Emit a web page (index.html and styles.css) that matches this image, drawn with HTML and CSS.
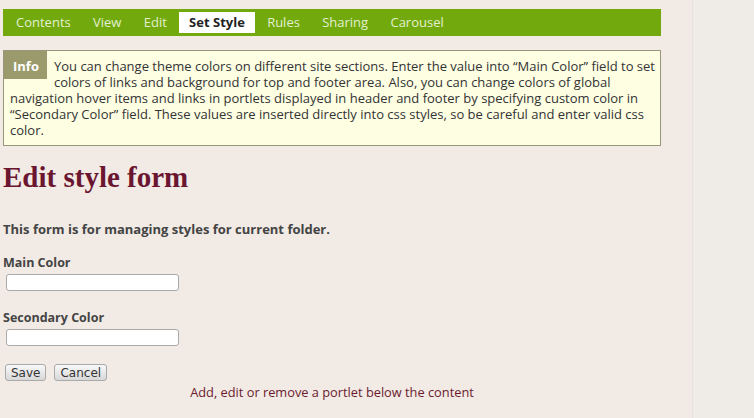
FILE: index.html
```html
<!DOCTYPE html>
<html>
<head>
<meta charset="utf-8">
<link rel="stylesheet" href="styles.css">
</head>
<body>
<div class="page">
  <main class="content">
    <nav class="tabs">
      <a class="tab">Contents</a>
      <a class="tab">View</a>
      <a class="tab">Edit</a>
      <a class="tab active">Set Style</a>
      <a class="tab">Rules</a>
      <a class="tab">Sharing</a>
      <a class="tab">Carousel</a>
    </nav>
    <div class="info">
      <span class="info-label">Info</span>
      <span class="info-text">You can change theme colors on different site sections. Enter the value into “Main Color” field to set colors of links and background for top and footer area. Also, you can change colors of global navigation hover items and links in portlets displayed in header and footer by specifying custom color in “Secondary Color” field. These values are inserted directly into css styles, so be careful and enter valid css color.</span>
    </div>
    <h1 class="title">Edit style form</h1>
    <p class="desc">This form is for managing styles for current folder.</p>
    <form class="form">
      <div class="field">
        <label class="label">Main Color</label>
        <input class="input" type="text">
      </div>
      <div class="field">
        <label class="label">Secondary Color</label>
        <input class="input" type="text">
      </div>
      <div class="buttons">
        <button class="btn" type="button">Save</button>
        <button class="btn" type="button">Cancel</button>
      </div>
    </form>
    <a class="portlet-link">Add, edit or remove a portlet below the content</a>
  </main>
  <aside class="sidebar"></aside>
</div>
</body>
</html>
```
FILE: styles.css
```css
html, body {
  margin: 0;
  padding: 0;
  height: 100%;
}
body {
  background: #f1eae5;
  font-family: "Open Sans", "Liberation Sans", sans-serif;
  font-size: 13px;
  color: #333;
  overflow: hidden;
}
.page {
  display: flex;
  height: 418px;
}
.content {
  width: 658px;
  margin-left: 3px;
  padding-top: 9px;
}
.sidebar {
  margin-left: 31px;
  flex: 1;
  background: #efebe6;
  border-left: 1px solid #e9e3dd;
}
.tabs {
  display: flex;
  align-items: center;
  height: 27px;
  background: #72aa0e;
  padding-left: 3px;
}
.tab {
  color: #e3efcf;
  padding: 2px 10px 3px;
  line-height: 16px;
  margin-right: 2.3px;
}
.tab.active {
  background: #fff;
  color: #222;
  font-weight: bold;
}
.info {
  margin-top: 14px;
  background: #fefee3;
  border: 1px solid #99977a;
  padding: 7px 0 0 6px;
  line-height: 16px;
  color: #333;
  box-sizing: border-box;
  height: 96px;
}
.info-label {
  float: left;
  background: #9b9a6c;
  color: #fff;
  font-weight: bold;
  height: 28px;
  line-height: 30px;
  padding: 0 8px 0 9px;
  margin: -7px 7px 0 -6px;
}
.title {
  font-family: "Liberation Serif", "DejaVu Serif", serif;
  font-size: 29px;
  color: #6b1630;
  margin: 16px 0 0;
  line-height: 30px;
}
.desc {
  font-weight: bold;
  color: #444;
  margin: 28px 0 0;
  line-height: 18px;
}
.form {
  margin-top: 16px;
}
.field {
  margin-bottom: 18px;
}
.label {
  display: block;
  font-weight: bold;
  font-size: 12.5px;
  color: #444;
  line-height: 18px;
}
.input {
  display: block;
  margin: 2px 0 0 3px;
  width: 173px;
  height: 17px;
  box-sizing: border-box;
  border: 1px solid #aaa;
  border-radius: 3px;
  background: #fff;
  padding: 0;
}
.buttons {
  display: flex;
  gap: 8px;
  margin-left: 2px;
}
.btn {
  font-family: "DejaVu Sans", sans-serif;
  font-size: 12px;
  height: 17px;
  padding: 0 5px;
  border: 1px solid #aaa;
  border-radius: 3px;
  background: linear-gradient(#f8f8f8, #d8d8d8);
  color: #333;
  line-height: 14px;
}
.portlet-link {
  display: block;
  text-align: center;
  color: #6b1a2e;
  font-size: 12.8px;
  margin-top: 2px;
  line-height: 18px;
}
```
